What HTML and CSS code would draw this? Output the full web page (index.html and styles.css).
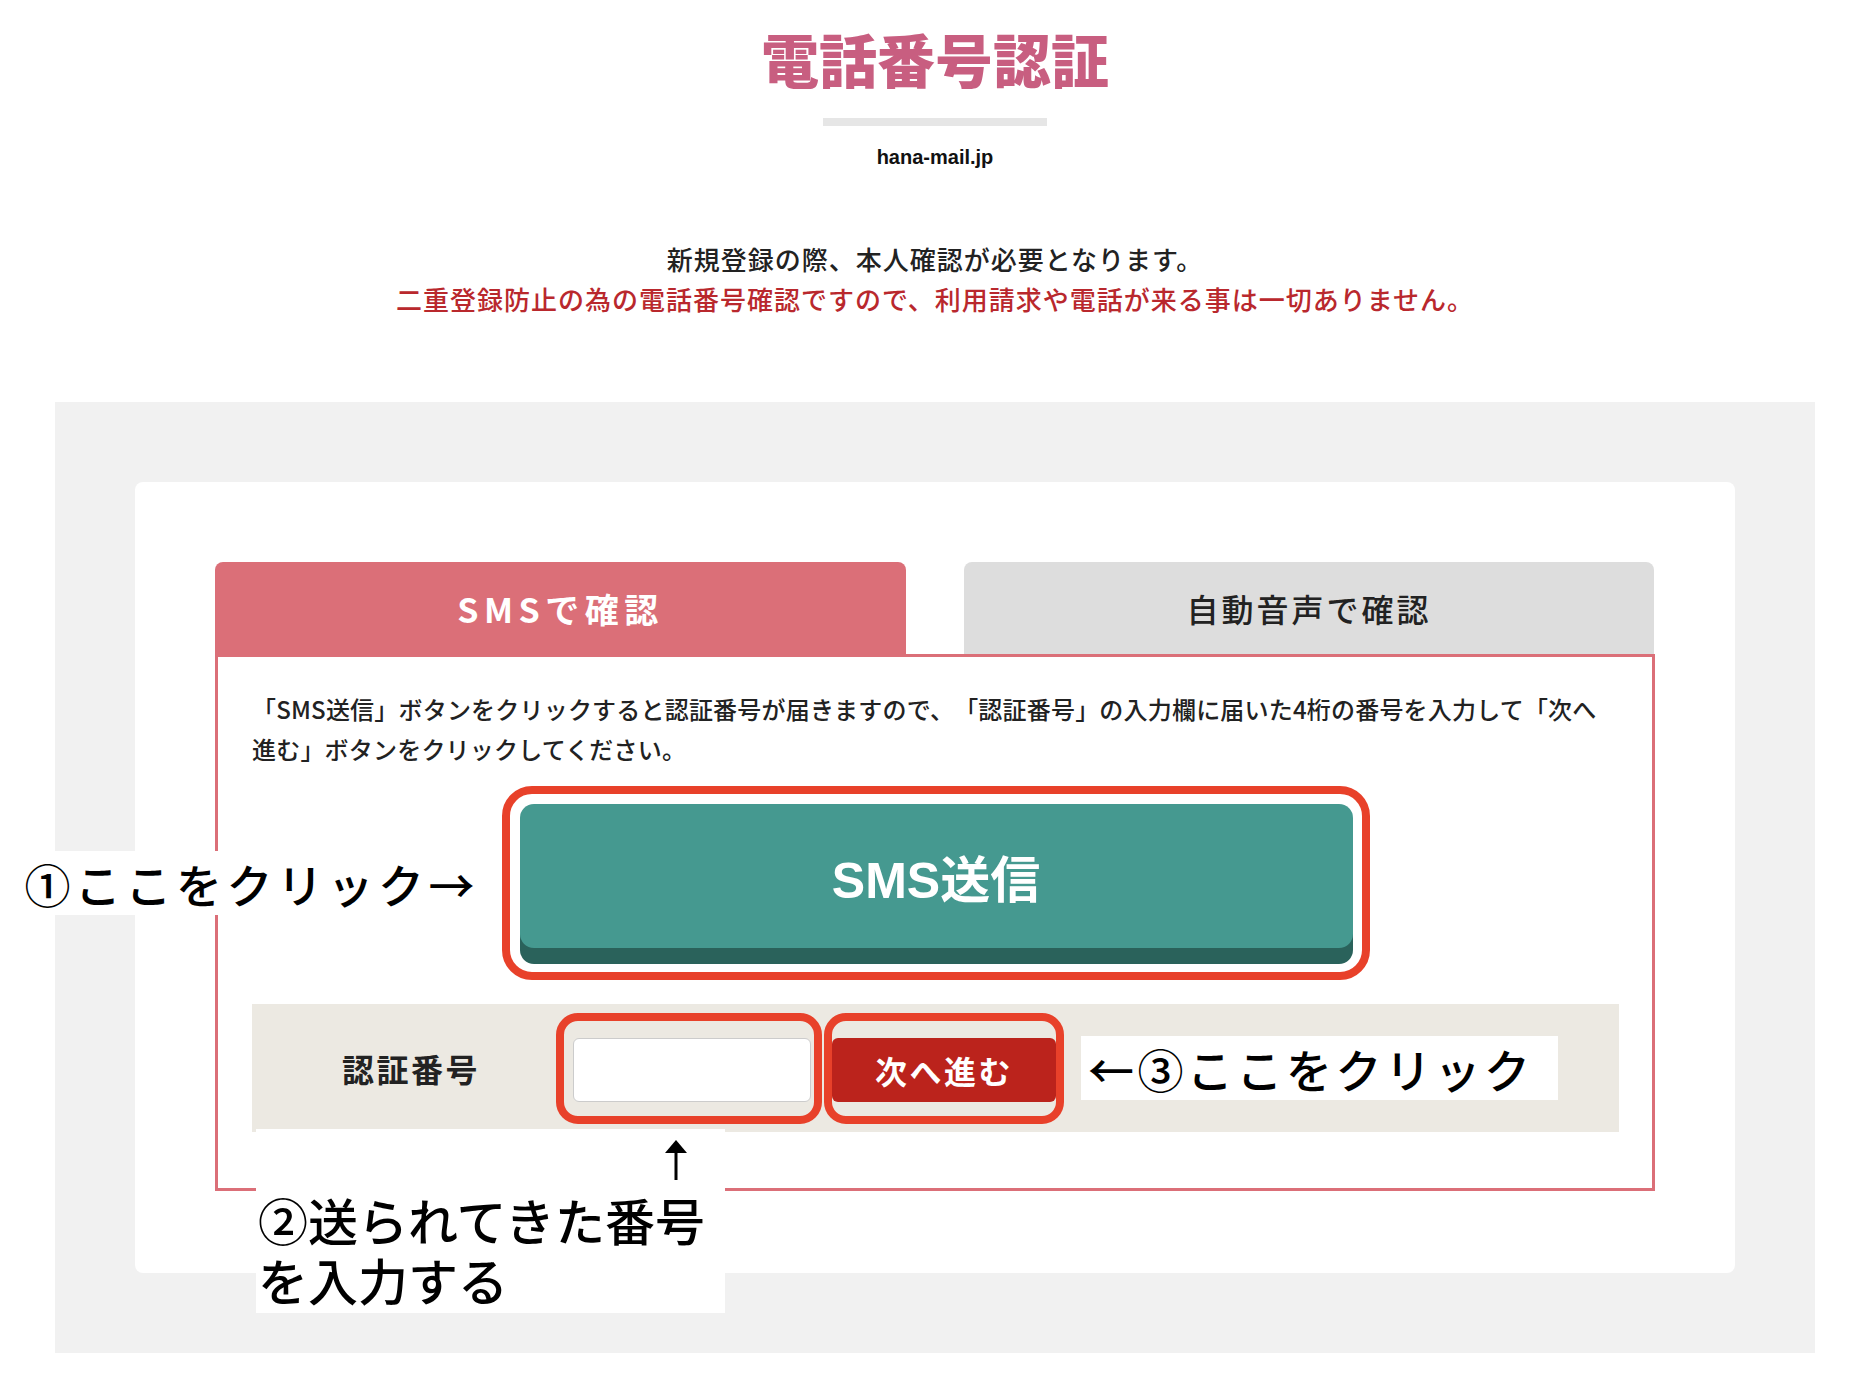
FILE: index.html
```html
<html lang="ja">
  <head>
    <meta charset="utf-8" />
    <title>電話番号認証</title>
    <link rel="stylesheet" href="styles.css">
  </head>
  <body>
    <header class="page-head">
      <h1 class="page-title">電話番号認証</h1>
      <div class="title-rule"></div>
      <p class="site-name">hana-mail.jp</p>
    </header>

    <div class="intro">
      <p>新規登録の際、本人確認が必要となります。</p>
      <p class="intro-note">二重登録防止の為の電話番号確認ですので、利用請求や電話が来る事は一切ありません。</p>
    </div>

    <section class="verify-area">
      <div class="verify-card">
        <div class="tabs">
          <div class="tab tab-active">SMSで確認</div>
          <div class="tab">自動音声で確認</div>
        </div>

        <div class="tab-panel">
          <p class="panel-text">「SMS送信」ボタンをクリックすると認証番号が届きますので、「認証番号」の入力欄に届いた4桁の番号を入力して「次へ<br>進む」ボタンをクリックしてください。</p>

          <div class="send-wrap">
            <div class="mark mark-send">
              <button class="btn-send" type="button">SMS送信</button>
              <div class="note note-1">①ここをクリック→</div>
            </div>
          </div>

          <div class="code-row">
            <label class="code-label" for="code">認証番号</label>
            <div class="mark mark-input">
              <input class="code-input" id="code" type="text" />
            </div>
            <div class="mark mark-next">
              <button class="btn-next" type="button">次へ進む</button>
            </div>
            <div class="note note-3">←③ここをクリック</div>

            <!-- annotation under the input -->
            <div class="note note-2">
              <svg class="up-arrow" width="22" height="40" viewBox="0 0 22 40">
                <polygon points="11,0 22,13 0,13" fill="#000" />
                <rect x="9.5" y="10" width="3" height="30" fill="#000" />
              </svg>
              <p>②送られてきた番号<br>を入力する</p>
            </div>
          </div>
        </div>
      </div>
    </section>
  </body>
</html>
```

FILE: styles.css
```css
body {
  margin: 0;
  font-family: "Noto Sans CJK JP", sans-serif;
  color: #222;
  background: #fff;
  text-spacing-trim: space-all;
}

p {
  margin: 0;
}

.page-head {
  padding-top: 24px;
  text-align: center;
}

.page-title {
  margin: 0;
  font-size: 58px;
  line-height: 68px;
  font-weight: 900;
  color: #c85e80;
}

.title-rule {
  width: 224px;
  height: 8px;
  margin: 26px auto 0;
  background: #e6e6e6;
}

.site-name {
  margin-top: 19px;
  font-family: "Liberation Sans", Arial, sans-serif;
  font-size: 20px;
  line-height: 24px;
  font-weight: bold;
  color: #111;
}

.intro {
  margin-top: 70px;
  text-align: center;
  font-size: 26px;
  line-height: 40px;
  letter-spacing: 1px;
  font-weight: 500;
}

.intro-note {
  color: #b9282d;
}

.verify-area {
  width: 1760px;
  margin: 83px auto 0;
  padding: 80px;
  box-sizing: border-box;
  background: #f1f1f1;
}

.verify-card {
  padding: 80px 80px 82px;
  background: #fff;
  border-radius: 8px;
}

.tabs {
  display: grid;
  grid-template-columns: 691px 690px;
  gap: 58px;
}

.tab {
  height: 92px;
  display: flex;
  align-items: center;
  justify-content: center;
  border-radius: 8px 8px 0 0;
  background: #dddddd;
  font-size: 32px;
  font-weight: 500;
  letter-spacing: 3px;
}

.tab-active {
  background: #db6f78;
  color: #fff;
  font-size: 34px;
  font-weight: bold;
  letter-spacing: 5.5px;
}

.tab-panel {
  border: 3px solid #db6f78;
  padding: 32px 33px 56px 34px;
}

.panel-text {
  font-size: 24px;
  line-height: 40px;
  letter-spacing: 0.2px;
  font-weight: 500;
}

.send-wrap {
  display: flex;
  justify-content: center;
  margin-top: 17px;
}

.mark {
  border: 8px solid #e8412a;
  background: transparent;
}

.mark-send {
  position: relative;
  border-radius: 30px;
  padding: 10px 9px 8px 10px;
}

.btn-send {
  display: block;
  width: 833px;
  height: 144px;
  margin-bottom: 16px;
  border: none;
  border-radius: 14px;
  background: #459990;
  box-shadow: 0 16px 0 #2a625b;
  color: #fff;
  font-family: "Liberation Sans", "Noto Sans CJK JP", sans-serif;
  font-size: 50px;
  font-weight: bold;
  cursor: pointer;
}

.note {
  background: #fff;
  color: #000;
  font-weight: 500;
  white-space: nowrap;
}

.note-1 {
  position: absolute;
  top: 57px;
  right: calc(100% + 12px);
  width: 473px;
  height: 64px;
  padding-left: 11px;
  display: flex;
  align-items: center;
  font-size: 46px;
  letter-spacing: 4.5px;
}

.code-row {
  position: relative;
  height: 128px;
  margin-top: 24px;
  display: flex;
  align-items: center;
  background: #ece9e2;
}

.code-label {
  width: 290px;
  padding-left: 14px;
  text-align: center;
  font-size: 32px;
  line-height: 1;
  font-weight: bold;
  letter-spacing: 2.5px;
}

.mark-input {
  border-radius: 22px;
  padding: 17px 3px 14px 9px;
}

.code-input {
  display: block;
  width: 238px;
  height: 64px;
  box-sizing: border-box;
  border: 1px solid #cccccc;
  border-radius: 6px;
  background: #fff;
}

.mark-next {
  margin-left: 2px;
  border-radius: 22px;
  padding: 17px 0 14px;
}

.btn-next {
  display: block;
  width: 224px;
  height: 64px;
  border: none;
  border-radius: 6px;
  background: #bb231c;
  color: #fff;
  font-family: "Noto Sans CJK JP", sans-serif;
  font-size: 32px;
  font-weight: bold;
  letter-spacing: 2.5px;
  cursor: pointer;
}

.note-3 {
  margin-left: 17px;
  width: 470px;
  height: 64px;
  padding-left: 7px;
  display: flex;
  align-items: center;
  font-size: 46px;
  letter-spacing: 3.5px;
}

.note-2 {
  position: absolute;
  left: 4px;
  top: 125px;
  width: 469px;
  height: 184px;
  padding-left: 2px;
  box-sizing: border-box;
}

.up-arrow {
  display: block;
  margin: 11px 0 0 407px;
}

.note-2 p {
  margin-top: 9px;
  font-size: 50px;
  line-height: 60px;
}
```
